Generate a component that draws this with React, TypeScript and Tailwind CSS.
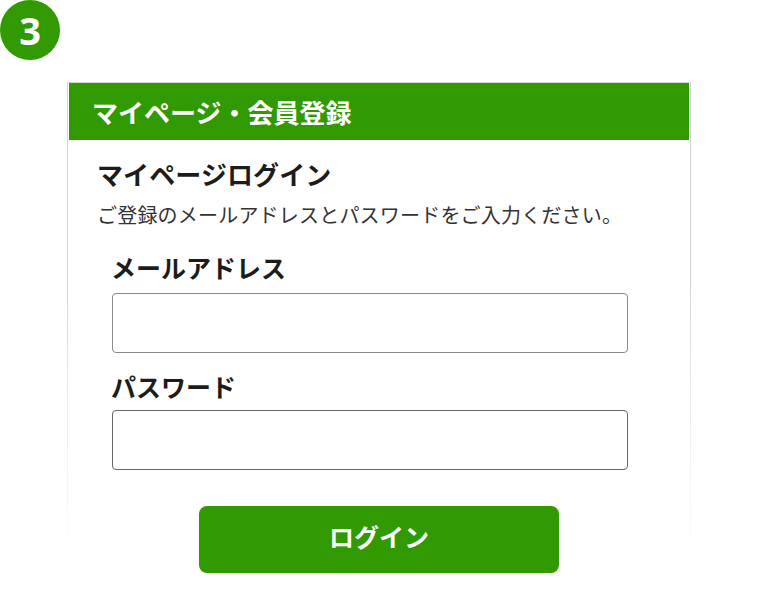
export default function App() {
  return (
    <div className="w-[758px] h-[602px] bg-white overflow-hidden font-['Liberation_Sans','Noto_Sans_CJK_JP',sans-serif] text-[#1c1c1c]">
      <div className="w-[60px] h-[60px] rounded-full bg-[#319a02] flex items-center justify-center text-white text-[38px] font-bold leading-none font-['Open_Sans',sans-serif]">
        3
      </div>
      <div className="ml-[67px] mt-[22px] w-[624px] h-[498px] p-px bg-[linear-gradient(to_bottom,#d4d4d4_0%,#d4d4d4_40%,#eeeeee_65%,#ffffff_98%)]">
        <div className="h-full bg-white">
          <div className="mx-px h-[57px] bg-[#319a02] flex items-center pl-[23px] pt-[4px] text-white text-[26px] font-bold leading-none">
            マイページ・会員登録
          </div>
          <div className="pt-[21px] pl-[29px]">
            <h2 className="text-[26px] tracking-[0.1px] font-bold leading-[30px]">マイページログイン</h2>
            <p className="mt-[10px] text-[20px] tracking-[0.2px] leading-[30px] text-[#333]">ご登録のメールアドレスとパスワードをご入力ください。</p>
            <div className="ml-[15px] mt-[20px] w-[516px]">
              <label className="block -ml-px text-[25px] font-bold leading-[36px]">メールアドレス</label>
              <input type="text" className="block mt-[6px] w-[516px] h-[60px] bg-white border border-[#8a8a8a] rounded-[4px]" />
              <label className="block -ml-px mt-[17px] text-[25px] font-bold leading-[36px]">パスワード</label>
              <input type="password" className="block mt-[4px] w-[516px] h-[60px] bg-white border border-[#666666] rounded-[4px]" />
            </div>
            <button className="block ml-[102px] mt-[36px] w-[360px] h-[67px] pb-[2px] bg-[#319a02] rounded-[8px] text-white text-[25px] font-bold leading-none">
              ログイン
            </button>
          </div>
        </div>
      </div>
    </div>
  );
}
